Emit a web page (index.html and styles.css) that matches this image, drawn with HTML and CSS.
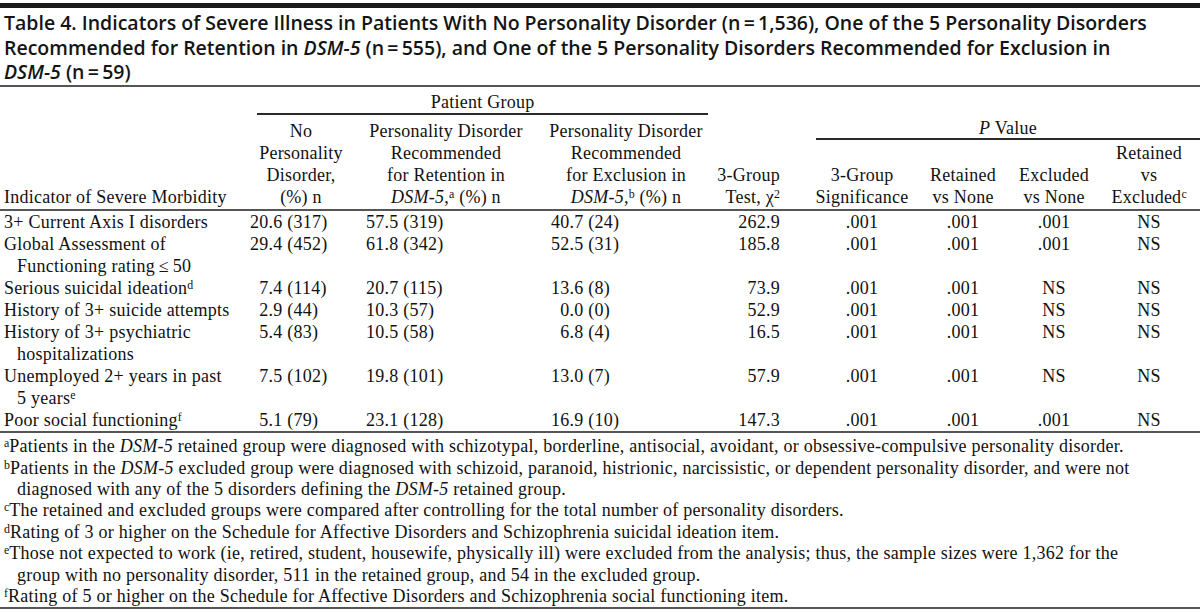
FILE: index.html
```html
<!DOCTYPE html>
<html lang="en">
<head>
<meta charset="utf-8">
<title>Table 4</title>
<link rel="stylesheet" href="styles.css">
</head>
<body>
<div class="sheet">
  <h1 class="title">Table 4. Indicators of Severe Illness in Patients With No Personality Disorder (n&#8201;=&#8201;1,536), One of the 5 Personality Disorders<br>Recommended for Retention in <i>DSM-5</i> (n&#8201;=&#8201;555), and One of the 5 Personality Disorders Recommended for Exclusion in<br><i>DSM-5</i> (n&#8201;=&#8201;59)</h1>
  <table class="data">
    <colgroup>
      <col class="w1"><col class="w2"><col class="w3"><col class="w4"><col class="w5"><col class="w6"><col class="w7"><col class="w8"><col class="w9">
    </colgroup>
    <thead>
      <tr class="row-group">
        <th></th>
        <th colspan="3"><div class="span-line pg">Patient Group</div></th>
        <th colspan="5"></th>
      </tr>
      <tr class="row-p">
        <th rowspan="2" class="lbl">Indicator of Severe Morbidity</th>
        <th rowspan="2">No<br>Personality<br>Disorder,<br>(%) n</th>
        <th rowspan="2">Personality Disorder<br>Recommended<br>for Retention in<br><i>DSM-5</i>,<sup>a</sup> (%) n</th>
        <th rowspan="2">Personality Disorder<br>Recommended<br>for Exclusion in<br><i>DSM-5</i>,<sup>b</sup> (%) n</th>
        <th rowspan="2" class="chi">3-Group<br>Test, &chi;<sup>2</sup></th>
        <th colspan="4" class="pcell"><div class="span-line pv"><i>P</i> Value</div></th>
      </tr>
      <tr class="row-sub">
        <th>3-Group<br>Significance</th>
        <th>Retained<br>vs None</th>
        <th>Excluded<br>vs None</th>
        <th>Retained<br>vs<br>Excluded<sup>c</sup></th>
      </tr>
    </thead>
    <tbody>
      <tr>
        <td class="lbl">3+ Current Axis I disorders</td>
        <td class="c2">20.6 (317)</td><td class="c3">57.5 (319)</td><td class="c4">40.7 (24)</td>
        <td class="c5">262.9</td><td class="cc">.001</td><td class="cc">.001</td><td class="cc">.001</td><td class="cc">NS</td>
      </tr>
      <tr>
        <td class="lbl">Global Assessment of<br>Functioning rating&#8201;&le;&#8201;50</td>
        <td class="c2">29.4 (452)</td><td class="c3">61.8 (342)</td><td class="c4">52.5 (31)</td>
        <td class="c5">185.8</td><td class="cc">.001</td><td class="cc">.001</td><td class="cc">.001</td><td class="cc">NS</td>
      </tr>
      <tr>
        <td class="lbl">Serious suicidal ideation<sup>d</sup></td>
        <td class="c2"><span class="fig">0</span>7.4 (114)</td><td class="c3">20.7 (115)</td><td class="c4">13.6 (8)</td>
        <td class="c5">73.9</td><td class="cc">.001</td><td class="cc">.001</td><td class="cc">NS</td><td class="cc">NS</td>
      </tr>
      <tr>
        <td class="lbl">History of 3+ suicide attempts</td>
        <td class="c2"><span class="fig">0</span>2.9 (44)</td><td class="c3">10.3 (57)</td><td class="c4"><span class="fig">0</span>0.0 (0)</td>
        <td class="c5">52.9</td><td class="cc">.001</td><td class="cc">.001</td><td class="cc">NS</td><td class="cc">NS</td>
      </tr>
      <tr>
        <td class="lbl">History of 3+ psychiatric<br>hospitalizations</td>
        <td class="c2"><span class="fig">0</span>5.4 (83)</td><td class="c3">10.5 (58)</td><td class="c4"><span class="fig">0</span>6.8 (4)</td>
        <td class="c5">16.5</td><td class="cc">.001</td><td class="cc">.001</td><td class="cc">NS</td><td class="cc">NS</td>
      </tr>
      <tr>
        <td class="lbl">Unemployed 2+ years in past<br>5 years<sup>e</sup></td>
        <td class="c2"><span class="fig">0</span>7.5 (102)</td><td class="c3">19.8 (101)</td><td class="c4">13.0 (7)</td>
        <td class="c5">57.9</td><td class="cc">.001</td><td class="cc">.001</td><td class="cc">NS</td><td class="cc">NS</td>
      </tr>
      <tr>
        <td class="lbl">Poor social functioning<sup>f</sup></td>
        <td class="c2"><span class="fig">0</span>5.1 (79)</td><td class="c3">23.1 (128)</td><td class="c4">16.9 (10)</td>
        <td class="c5">147.3</td><td class="cc">.001</td><td class="cc">.001</td><td class="cc">.001</td><td class="cc">NS</td>
      </tr>
    </tbody>
  </table>
  <div class="notes">
    <p><sup>a</sup>Patients in the <i>DSM-5</i> retained group were diagnosed with schizotypal, borderline, antisocial, avoidant, or obsessive-compulsive personality disorder.</p>
    <p><sup>b</sup>Patients in the <i>DSM-5</i> excluded group were diagnosed with schizoid, paranoid, histrionic, narcissistic, or dependent personality disorder, and were not<br>diagnosed with any of the 5 disorders defining the <i>DSM-5</i> retained group.</p>
    <p><sup>c</sup>The retained and excluded groups were compared after controlling for the total number of personality disorders.</p>
    <p><sup>d</sup>Rating of 3 or higher on the Schedule for Affective Disorders and Schizophrenia suicidal ideation item.</p>
    <p><sup>e</sup>Those not expected to work (ie, retired, student, housewife, physically ill) were excluded from the analysis; thus, the sample sizes were 1,362 for the<br>group with no personality disorder, 511 in the retained group, and 54 in the excluded group.</p>
    <p><sup>f</sup>Rating of 5 or higher on the Schedule for Affective Disorders and Schizophrenia social functioning item.</p>
  </div>
</div>
</body>
</html>
```

FILE: styles.css
```css
html, body {
  margin: 0;
  background: #ffffff;
  color: #111111;
}

.sheet {
  width: 1200px;
  padding-top: 3px;
}

.title {
  margin: 0;
  padding: 3px 4px 0;
  border-top: 5px solid #1a1a1a;
  border-bottom: 2px solid #555555;
  font-family: "Open Sans", "Noto Sans", sans-serif;
  font-weight: 600;
  font-size: 19.5px;
  line-height: 24.7px;
  letter-spacing: 0;
  color: #141414;
}

.data {
  width: 1200px;
  border-collapse: collapse;
  table-layout: fixed;
  font-family: "Liberation Serif", "Times New Roman", serif;
  font-size: 18px;
  line-height: 22px;
  letter-spacing: 0.25px;
}

.w1 { width: 246px; }
.w2 { width: 110px; }
.w3 { width: 180px; }
.w4 { width: 180px; }
.w5 { width: 92px; }
.w6 { width: 108px; }
.w7 { width: 94px; }
.w8 { width: 88px; }
.w9 { width: 102px; }

th {
  font-weight: normal;
  padding: 0 0 1px;
  text-align: center;
  vertical-align: bottom;
  white-space: nowrap;
}

th.lbl {
  text-align: left;
  padding-left: 4px;
}

th.chi {
  text-align: right;
  padding-right: 28px;
}

.row-group th {
  padding-top: 4px;
  padding-bottom: 0;
}

.span-line {
  border-bottom: 2px solid #2a2a2a;
}

.pg {
  margin: 0 8px 0 11px;
}

.pv {
  margin-left: 8px;
  line-height: 20px;
}

.row-p .pcell {
  padding-top: 3px;
  padding-bottom: 0;
  vertical-align: top;
}

.row-sub th {
  padding-top: 2px;
}

thead {
  border-bottom: 2px solid #555555;
}

tbody {
  border-bottom: 2px solid #555555;
}

td {
  padding: 0;
  vertical-align: top;
  white-space: nowrap;
}

td.lbl {
  padding-left: 17px;
  text-indent: -13px;
}

td.c2 { padding-left: 4px; }
td.c3 { padding-left: 10px; }
td.c4 { padding-left: 15px; }
td.c5 { text-align: right; padding-right: 28px; }
td.cc { text-align: center; }

.fig {
  visibility: hidden;
}

sup {
  font-size: 0.66em;
  line-height: 0;
  vertical-align: 0.45em;
  letter-spacing: 0;
}

.notes {
  padding-top: 3px;
  border-bottom: 2px solid #555555;
  font-family: "Liberation Serif", "Times New Roman", serif;
  font-size: 18px;
  line-height: 21.4px;
  letter-spacing: 0.25px;
}

.notes p {
  margin: 0;
  padding-left: 17px;
  text-indent: -13px;
}
```
